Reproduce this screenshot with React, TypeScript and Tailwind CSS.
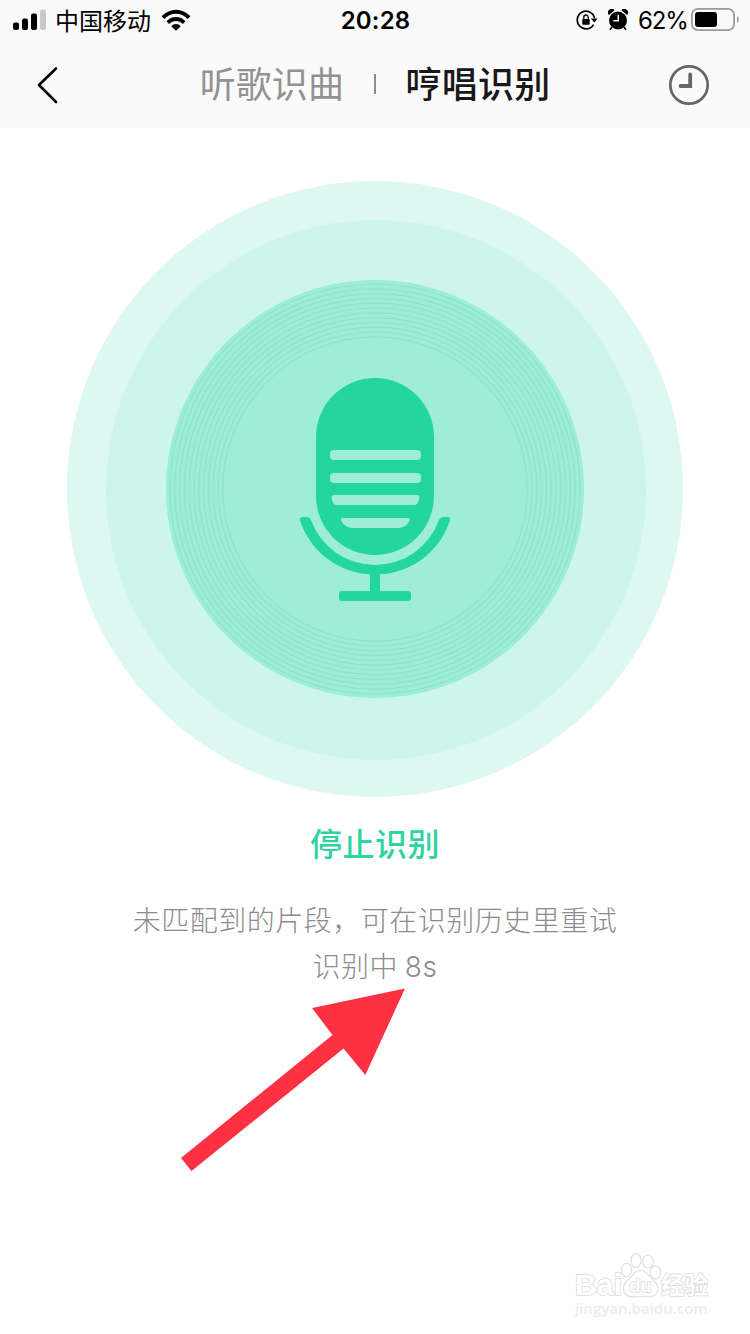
import React from 'react';

const RING_RADII = [205, 200.2, 195.4, 190.6, 185.8, 181, 176.2, 171.4, 166.6, 161.8, 157, 152.2];

const SignalIcon: React.FC = () => (
  <svg width="34" height="22" viewBox="0 0 34 22" className="shrink-0">
    <rect x="0" y="13.5" width="6" height="7.5" rx="2" fill="#000" />
    <rect x="9" y="9.5" width="6" height="11.5" rx="2" fill="#000" />
    <rect x="18" y="4.5" width="6" height="16.5" rx="2" fill="#000" />
    <rect x="27" y="0.5" width="6" height="20.5" rx="2" fill="#c8c8c8" />
  </svg>
);

const WifiIcon: React.FC = () => (
  <svg width="30" height="22" viewBox="0 0 30 22" className="shrink-0">
    <path d="M0.6 7.3C8.5-1.5 21.5-1.5 29.4 7.3L26.7 10C20.2 2.9 9.8 2.9 3.3 10Z" fill="#000" />
    <path d="M5.4 12.3C10.7 6.5 19.3 6.5 24.6 12.3L21.9 15C18 10.9 12 10.9 8.1 15Z" fill="#000" />
    <path d="M10.3 17.2C12.8 14.4 17.2 14.4 19.7 17.2L15 21.8Z" fill="#000" />
  </svg>
);

const RotationLockIcon: React.FC = () => (
  <svg width="22" height="22" viewBox="0 0 22 22" className="shrink-0">
    <path d="M17.6 15.6A8.8 8.8 0 1 1 18.6 9" fill="none" stroke="#000" strokeWidth="1.7" />
    <path d="M14.8 9.4H21.6L18.4 13.6Z" fill="#000" />
    <rect x="6.3" y="10" width="7.4" height="5.8" rx="0.8" fill="#000" />
    <path d="M7.8 10.5V8.2a2.2 2.2 0 0 1 4.4 0V10.5" fill="none" stroke="#000" strokeWidth="1.3" />
  </svg>
);

const AlarmIcon: React.FC = () => (
  <svg width="20" height="22" viewBox="0 0 20 22" className="shrink-0">
    <circle cx="10" cy="11.5" r="9" fill="#000" />
    <path d="M0.9 6A3.2 3.2 0 0 1 6.6 1.2ZM13.4 1.2A3.2 3.2 0 0 1 19.1 6Z" fill="#000" />
    <path d="M4 18 2 20.8M16 18 18 20.8" stroke="#000" strokeWidth="1.6" />
    <path d="M10.3 5.8V11.8H5.4" fill="none" stroke="#fafafa" strokeWidth="1.5" />
  </svg>
);

const BatteryIcon: React.FC = () => (
  <svg width="48" height="24" viewBox="0 0 48 24" className="shrink-0">
    <rect x="0.9" y="0.9" width="42.2" height="21.2" rx="6" fill="none" stroke="#9b9b9b" strokeWidth="1.8" />
    <rect x="4" y="4" width="22" height="15" rx="3" fill="#000" />
    <path d="M46 8V15C48.3 13.6 48.3 9.4 46 8Z" fill="#9b9b9b" />
  </svg>
);

const StatusBar: React.FC = () => (
  <div className="flex h-10 items-center pl-[13px] pr-[11px]">
    <div className="flex flex-1 items-center">
      <SignalIcon />
      <span className="ml-2 w-[106px] whitespace-nowrap pb-px text-2xl leading-[38px]">中国移动</span>
      <WifiIcon />
    </div>
    <span className="pr-px pt-0.5 font-[Inter] text-2xl font-semibold leading-10 tracking-[0.2px]">20:28</span>
    <div className="flex flex-1 items-center justify-end">
      <RotationLockIcon />
      <span className="ml-2.5 flex">
        <AlarmIcon />
      </span>
      <span className="ml-2.5 mr-1 w-[49px] whitespace-nowrap pt-0.5 font-[Inter] text-2xl leading-10 tracking-[-1.2px]">62%</span>
      <BatteryIcon />
    </div>
  </div>
);

const NavBar: React.FC = () => (
  <div className="flex h-[88px] items-center pl-9 pr-10">
    <div className="flex flex-1 pt-0.5">
      <svg width="24" height="38" viewBox="0 0 24 38">
        <path d="M20 2.5 3 19 20 36" fill="none" stroke="#000" strokeWidth="2.6" strokeLinecap="round" strokeLinejoin="round" />
      </svg>
    </div>
    <div className="flex items-center pl-1 text-4xl leading-[50px]">
      <span className="pb-[5px] tracking-[0.1px] text-[#929292]">听歌识曲</span>
      <span className="mx-[30px] h-5 w-[1.5px] bg-[#8c8c8c]" />
      <span className="pb-[5px] font-medium tracking-[0.2px] text-[#181818]">哼唱识别</span>
    </div>
    <div className="flex flex-1 justify-end pt-0.5">
      <svg width="42" height="42" viewBox="0 0 42 42">
        <circle cx="21" cy="21" r="18.7" fill="none" stroke="#666" strokeWidth="2.7" />
        <path d="M22.2 10.5V22H12.5" fill="none" stroke="#666" strokeWidth="3.8" strokeLinecap="round" />
      </svg>
    </div>
  </div>
);

const MicDisc: React.FC = () => (
  <svg width="616" height="616" viewBox="67 181 616 616" className="shrink-0">
    <circle cx="375" cy="489" r="308" fill="#ddf8f0" />
    <circle cx="376" cy="490" r="270" fill="#cdf5e9" />
    <circle cx="375" cy="489" r="209" fill="#9eeed6" />
    {/* record grooves */}
    {RING_RADII.map((r) => (
      <circle key={r} cx="375" cy="489" r={r} fill="none" stroke="#8de5ca" strokeWidth="1.2" />
    ))}
    {/* microphone */}
    <rect x="316" y="378" width="118" height="177" rx="59" fill="#23d59f" />
    <g fill="#9eeed6">
      <rect x="330" y="450" width="91" height="10" rx="4" />
      <rect x="330" y="473" width="91" height="10" rx="4" />
      <path d="M334 495H417Q420 495 419.4 498L418.6 501Q417.6 505 414 505H337Q333.4 505 332.4 501L331.7 498Q331.3 495 334 495Z" />
      <path d="M343 518H408Q411 518 409.6 521Q405.6 528 398.5 528H352.5Q345.4 528 341.4 521Q340 518 343 518Z" />
    </g>
    <path
      d="M302.5 517H307Q309.6 517 311 520A68 68 0 0 0 439 520Q440.4 517 443 517H447.5Q451 517 450 520.5A79 79 0 0 1 300 520.5Q299 517 302.5 517Z"
      fill="#23d59f"
    />
    <rect x="370" y="572" width="10" height="22" fill="#23d59f" />
    <rect x="339" y="591" width="72" height="10" rx="3" fill="#23d59f" />
  </svg>
);

const Arrow: React.FC = () => (
  <svg width="226" height="184" viewBox="0 0 226 184" className="absolute left-[180px] top-[988px]">
    <path d="M225 0.5 185.3 87 163.5 60.5 11.5 183 1 170 152.5 47 132 20Z" fill="#fe3143" />
  </svg>
);

const Watermark: React.FC = () => (
  <div className="absolute left-[573px] top-[1252px] flex w-[140px] flex-col">
    <svg
      width="140"
      height="46"
      viewBox="-2 0 140 46"
      className="overflow-visible font-['Liberation_Sans','Noto_Sans_CJK_SC',sans-serif] font-bold"
    >
      <g fill="#fff" stroke="#dedede" strokeWidth="1.1">
        <ellipse cx="51.5" cy="18" rx="5" ry="6.8" />
        <ellipse cx="61" cy="8.5" rx="5" ry="7" />
        <ellipse cx="73" cy="9.5" rx="5.4" ry="6.5" />
        <ellipse cx="80.5" cy="20.5" rx="5.2" ry="6.6" />
        <path d="M65.5 18.5C59 18.5 57.5 24 53 28C48 32 47 39 51 42.500C55 46.500 60 44.500 65.500 44.500C71 44.500 77 46.500 80.500 42.500C84.500 38 83 32 78 28C73.500 24 72 18.500 65.500 18.500Z" />
      </g>
      <g fill="#fff" stroke="#dcdcdc" strokeWidth="1.6" paintOrder="stroke">
        <text x="0" y="42.5" fontSize="29" textLength="47" lengthAdjust="spacingAndGlyphs">Bai</text>
        <text x="54.5" y="40" fontSize="18" textLength="22">du</text>
        <text x="86" y="42" fontSize="24" textLength="47" lengthAdjust="spacingAndGlyphs">经验</text>
      </g>
    </svg>
    <span className="h-5 whitespace-nowrap pl-0.5 font-['Open_Sans',sans-serif] text-[15px] font-semibold leading-5 text-[#ececec]">
      jingyan.baidu.com
    </span>
  </div>
);

export default function App() {
  return (
    <div className="relative h-[1334px] w-[750px] overflow-hidden bg-white font-['Noto_Sans_CJK_SC',sans-serif] text-black">
      <header className="h-32 bg-[#fafafa]">
        <StatusBar />
        <NavBar />
      </header>

      <main className="flex flex-col items-center pt-[53px]">
        <MicDisc />
        <button className="mt-[21px] h-12 whitespace-nowrap text-[32px] font-medium leading-[48px] tracking-[0.5px] text-[#2dd3a1]">
          停止识别
        </button>
        <div className="mt-[30px] whitespace-nowrap text-center text-[28px] font-light leading-[46px] tracking-[0.5px] text-[#8c8c8c]">
          <p>未匹配到的片段，可在识别历史里重试</p>
          <p>
            识别中 <span className="font-[Inter]">8s</span>
          </p>
        </div>
      </main>

      <Arrow />
      <Watermark />
    </div>
  );
}
